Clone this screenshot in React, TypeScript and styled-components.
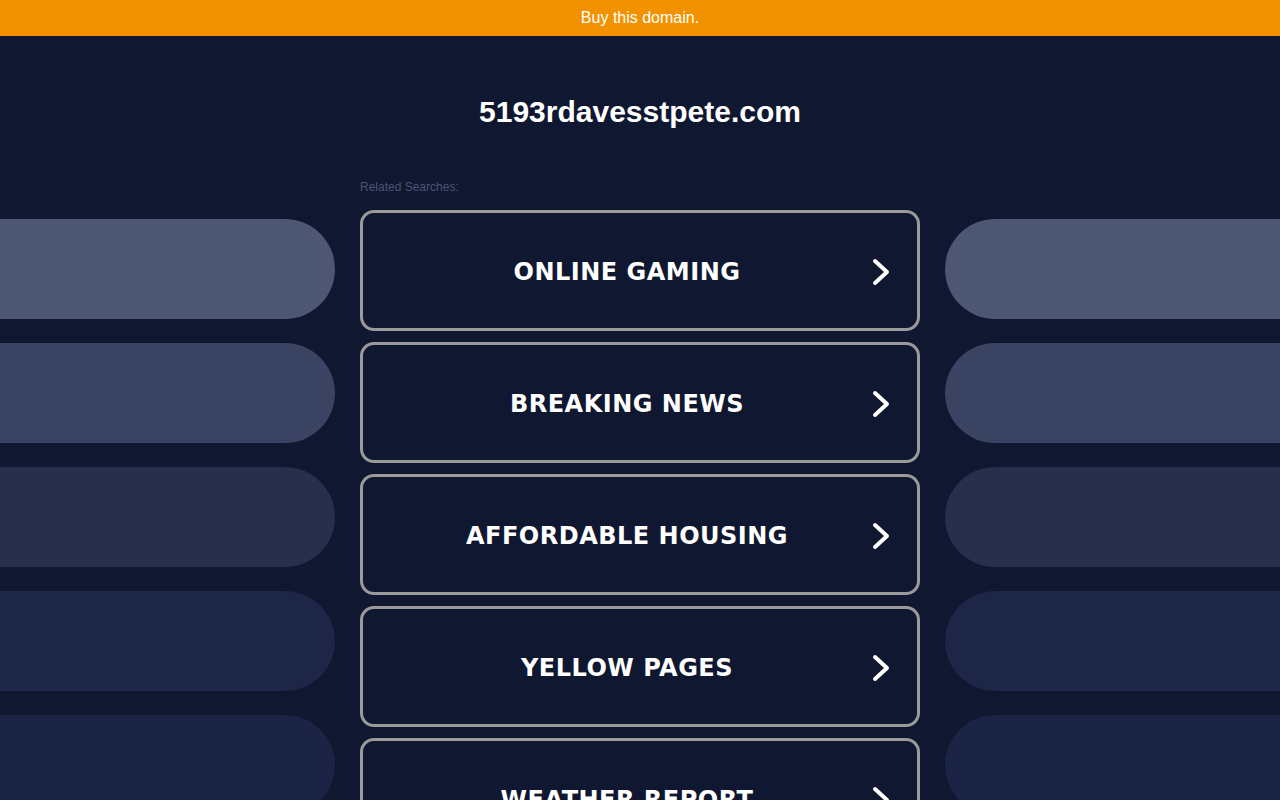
import React from "react";
import styled, { createGlobalStyle } from "styled-components";

const GlobalStyle = createGlobalStyle`
  html, body {
    margin: 0;
    padding: 0;
    background: #101730;
    overflow: hidden;
  }
  body {
    font-family: "Liberation Sans", Arial, sans-serif;
  }
`;

const TopBar = styled.a`
  display: flex;
  align-items: center;
  justify-content: center;
  height: 36px;
  background: #f39200;
  color: #ffffff;
  font-size: 16px;
  text-decoration: none;
`;

const Title = styled.h1`
  margin: 58px 0 0;
  text-align: center;
  color: #ffffff;
  font-size: 30px;
  line-height: 36px;
  font-weight: bold;
`;

const Layout = styled.div`
  display: grid;
  grid-template-columns: 335px 560px 335px;
  column-gap: 25px;
  margin-top: 49px;
`;

const Side = styled.div<{ $side: "left" | "right" }>`
  display: flex;
  flex-direction: column;
  gap: 24px;
  padding-top: 40px;
  align-items: ${(p) => (p.$side === "left" ? "flex-end" : "flex-start")};
`;

const Pill = styled.div<{ $side: "left" | "right"; $tone: string }>`
  width: 100%;
  height: 100px;
  background: ${(p) => p.$tone};
  border-radius: ${(p) => (p.$side === "left" ? "0 50px 50px 0" : "50px 0 0 50px")};
  flex-shrink: 0;
`;

const Main = styled.div`
  display: flex;
  flex-direction: column;
`;

const Label = styled.div`
  color: #4b5575;
  font-size: 12px;
  line-height: 16px;
  margin-bottom: 15px;
`;

const List = styled.div`
  display: flex;
  flex-direction: column;
  gap: 11px;
`;

const SearchLink = styled.a`
  display: flex;
  align-items: center;
  gap: 10px;
  box-sizing: border-box;
  height: 121px;
  padding: 2px 26px 0 30px;
  border: 3px solid #9a9a9a;
  border-radius: 14px;
  background: #101730;
  text-decoration: none;
  flex-shrink: 0;
`;

const SearchText = styled.span`
  flex: 1;
  text-align: center;
  color: #ffffff;
  font-family: "DejaVu Sans", Verdana, sans-serif;
  font-weight: bold;
  font-size: 24px;
  letter-spacing: 0.5px;
  text-transform: uppercase;
`;

const Chevron = () => (
  <svg width="20" height="28" viewBox="0 0 20 28" fill="none">
    <polyline
      points="4,3 16,14 4,25"
      stroke="#ffffff"
      strokeWidth="4"
      strokeLinecap="round"
      strokeLinejoin="round"
    />
  </svg>
);

const searches = [
  "Online Gaming",
  "Breaking News",
  "Affordable Housing",
  "Yellow Pages",
  "Weather Report",
];

const tones = ["#4d5673", "#3a4362", "#272f4d", "#1d2646", "#1b2444"];

const App: React.FC = () => {
  return (
    <>
      <GlobalStyle />
      <TopBar href="#">Buy this domain.</TopBar>
      <Title>5193rdavesstpete.com</Title>
      <Layout>
        <Side $side="left">
          {tones.map((t) => (
            <Pill key={t} $side="left" $tone={t} />
          ))}
        </Side>
        <Main>
          <Label>Related Searches:</Label>
          <List>
            {searches.map((s) => (
              <SearchLink href="#" key={s}>
                <SearchText>{s}</SearchText>
                <Chevron />
              </SearchLink>
            ))}
          </List>
        </Main>
        <Side $side="right">
          {tones.map((t) => (
            <Pill key={t} $side="right" $tone={t} />
          ))}
        </Side>
      </Layout>
    </>
  );
};

export default App;
